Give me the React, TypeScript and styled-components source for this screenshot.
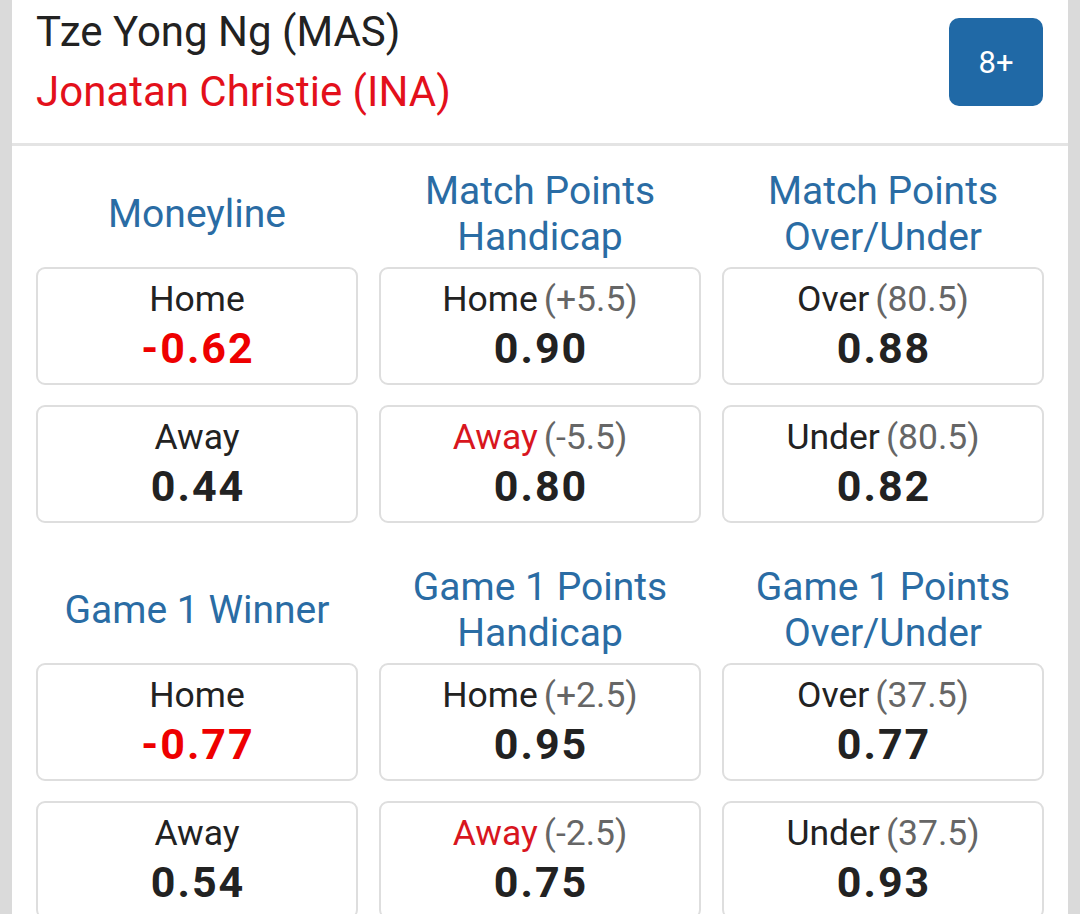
import React from "react";
import styled, { createGlobalStyle } from "styled-components";

const Global = createGlobalStyle`
  html, body { margin: 0; padding: 0; background: #dadada; }
  body { font-family: Roboto, "Noto Sans", Arial, sans-serif; overflow: hidden; }
  * { box-sizing: border-box; }
`;

const Page = styled.div`
  padding: 0 12px;
  min-height: 914px;
  background: #dadada;
`;

const Card = styled.div`
  background: #ffffff;
  min-height: 914px;
`;

const MatchHeader = styled.div`
  display: flex;
  justify-content: space-between;
  align-items: flex-start;
  padding: 2px 25px 21px 24px;
  border-bottom: 3px solid #e4e4e4;
`;

const Teams = styled.div`
  display: flex;
  flex-direction: column;
`;

const Team = styled.div<{ $away?: boolean }>`
  font-size: 42px;
  line-height: 60px;
  color: ${(p) => (p.$away ? "#e3101b" : "#222222")};
`;

const MoreButton = styled.button`
  margin-top: 16px;
  width: 94px;
  height: 88px;
  border: none;
  border-radius: 10px;
  background: #2069a6;
  color: #ffffff;
  font-family: Roboto, sans-serif;
  font-size: 31px;
  display: flex;
  align-items: center;
  justify-content: center;
`;

const Section = styled.div<{ $first?: boolean }>`
  display: grid;
  grid-template-columns: repeat(3, 1fr);
  column-gap: 21px;
  padding: 0 24px;
  margin-top: ${(p) => (p.$first ? "22px" : "41px")};
`;

const Market = styled.div`
  display: flex;
  flex-direction: column;
  gap: 20px;
`;

const Title = styled.div`
  min-height: 92px;
  margin-bottom: -13px;
  display: flex;
  align-items: center;
  justify-content: center;
  text-align: center;
  color: #2a6ca4;
  font-size: 39px;
  line-height: 46px;
`;

const OddBox = styled.div`
  height: 118px;
  border: 2px solid #dedede;
  border-radius: 9px;
  padding-top: 8px;
  text-align: center;
`;

const Label = styled.div`
  font-size: 35.5px;
  line-height: 44px;
  color: #222222;
`;

const Side = styled.span<{ $red?: boolean }>`
  color: ${(p) => (p.$red ? "#d8161e" : "#222222")};
`;

const Line = styled.span`
  color: #666666;
  margin-left: 6px;
`;

const Value = styled.div<{ $neg?: boolean }>`
  margin-top: 3px;
  font-size: 43px;
  line-height: 48px;
  font-weight: 700;
  letter-spacing: 2px;
  padding-left: 2px;
  color: ${(p) => (p.$neg ? "#ee0000" : "#222222")};
`;

type Odd = { side: string; line?: string; value: string; redSide?: boolean };
type MarketData = { title: React.ReactNode; odds: Odd[] };

const sections: MarketData[][] = [
  [
    {
      title: "Moneyline",
      odds: [
        { side: "Home", value: "-0.62" },
        { side: "Away", value: "0.44" },
      ],
    },
    {
      title: (
        <>
          Match Points
          <br />
          Handicap
        </>
      ),
      odds: [
        { side: "Home", line: "(+5.5)", value: "0.90" },
        { side: "Away", line: "(-5.5)", value: "0.80", redSide: true },
      ],
    },
    {
      title: (
        <>
          Match Points
          <br />
          Over/Under
        </>
      ),
      odds: [
        { side: "Over", line: "(80.5)", value: "0.88" },
        { side: "Under", line: "(80.5)", value: "0.82" },
      ],
    },
  ],
  [
    {
      title: "Game 1 Winner",
      odds: [
        { side: "Home", value: "-0.77" },
        { side: "Away", value: "0.54" },
      ],
    },
    {
      title: (
        <>
          Game 1 Points
          <br />
          Handicap
        </>
      ),
      odds: [
        { side: "Home", line: "(+2.5)", value: "0.95" },
        { side: "Away", line: "(-2.5)", value: "0.75", redSide: true },
      ],
    },
    {
      title: (
        <>
          Game 1 Points
          <br />
          Over/Under
        </>
      ),
      odds: [
        { side: "Over", line: "(37.5)", value: "0.77" },
        { side: "Under", line: "(37.5)", value: "0.93" },
      ],
    },
  ],
];

export default function App() {
  return (
    <Page>
      <Global />
      <Card>
        <MatchHeader>
          <Teams>
            <Team>Tze Yong Ng (MAS)</Team>
            <Team $away>Jonatan Christie (INA)</Team>
          </Teams>
          <MoreButton>8+</MoreButton>
        </MatchHeader>
        {sections.map((markets, si) => (
          <Section key={si} $first={si === 0}>
            {markets.map((m, mi) => (
              <Market key={mi}>
                <Title>{m.title}</Title>
                {m.odds.map((o, oi) => (
                  <OddBox key={oi}>
                    <Label>
                      <Side $red={o.redSide}>{o.side}</Side>
                      {o.line && <Line>{o.line}</Line>}
                    </Label>
                    <Value $neg={o.value.startsWith("-")}>{o.value}</Value>
                  </OddBox>
                ))}
              </Market>
            ))}
          </Section>
        ))}
      </Card>
    </Page>
  );
}
